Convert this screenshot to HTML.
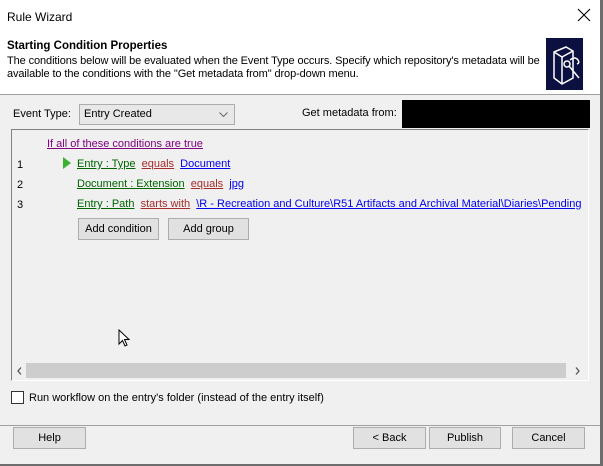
<!DOCTYPE html>
<html><head><meta charset="utf-8"><style>
*{margin:0;padding:0;box-sizing:border-box}
body{width:603px;height:466px;overflow:hidden;background:#6d6d6d;font-family:"Liberation Sans",Tahoma,sans-serif;font-size:11px;color:#000;position:relative}
.win{position:absolute;left:0;top:0;width:600px;height:464px;background:#f0f0f0}
.title{position:absolute;left:0;top:0;width:600px;height:34px;background:#fff}
.title span{position:absolute;left:7px;top:10px;font-size:12px}
.close{position:absolute;left:577px;top:8px}
.hdr{position:absolute;left:0;top:34px;width:600px;height:61px;background:#fff;border-bottom:1px solid #a0a0a0}
.hdr b{position:absolute;left:7px;top:6px;font-size:11.5px}
.hdr p{position:absolute;left:7px;top:21px;width:545px;line-height:13px;font-size:11px;letter-spacing:-0.1px}
.icon{position:absolute;left:546px;top:4px;width:37px;height:52px;background:#0c1040}
.abs{position:absolute}
.sel{left:79px;top:104px;width:156px;height:21px;border:1px solid #adadad;background:#e8e8e8;padding:3px 4px}
.blk{left:402px;top:100px;width:188px;height:28px;background:#000}
.panel{left:11px;top:129px;width:578px;height:252px;border:1px solid #828282;border-right-color:#fff;border-bottom-color:#fff;background:#f0f0f0}
a{text-decoration:underline}
.g{color:#006400}.r{color:#a52a2a}.b{color:#0000ee}.p{color:#800080}
.btn{position:absolute;height:22px;border:1px solid #adadad;background:#e1e1e1;text-align:center;line-height:20px;font-size:11px}
.sb{left:12px;top:361px;width:576px;height:18px;background:#f0f0f0}
.sbt{left:26px;top:363px;width:540px;height:15px;background:#cdcdcd}
</style></head><body>
<div class="win">
<div class="title"><span>Rule Wizard</span><svg class="close" width="14" height="14" viewBox="0 0 14 14"><path d="M1 1L13 13M13 1L1 13" stroke="#000" stroke-width="1.1"/></svg></div>
<div class="hdr"><b>Starting Condition Properties</b>
<p>The conditions below will be evaluated when the Event Type occurs. Specify which repository's metadata will be available to the conditions with the "Get metadata from" drop-down menu.</p>
<div class="icon"><svg width="37" height="52" viewBox="0 0 37 52"><g fill="none" stroke="#fff" stroke-width="1.5"><path d="M8 14 L20 9 L27 13 L27 40 L16 46 L8 40 Z M8 14 L16 19 L27 13 M16 19 L16 46"/><circle cx="21" cy="26" r="3"/><path d="M23 28 L33 40"/><path d="M24 22 q5 -4 8 0 q2 3 -1 4"/></g></svg></div>
</div>
<div class="abs" style="left:13px;top:108px">Event Type:</div>
<div class="abs sel">Entry Created<svg style="position:absolute;right:6px;top:7px" width="9" height="5" viewBox="0 0 9 5"><path d="M0.5 0.5L4.5 4.5L8.5 0.5" fill="none" stroke="#666"/></svg></div>
<div class="abs" style="left:302px;top:107px">Get metadata from:</div>
<div class="abs blk"></div>
<div class="abs panel"></div>
<div class="abs" style="left:47px;top:138px"><a class="p">If all of these conditions are true</a></div>
<div class="abs" style="left:17px;top:159px">1</div>
<div class="abs" style="left:63px;top:157px;width:0;height:0;border-left:8px solid #3cb030;border-top:6px solid transparent;border-bottom:6px solid transparent"></div>
<div class="abs" style="left:77px;top:158px"><a class="g">Entry : Type</a>&nbsp; <a class="r">equals</a>&nbsp; <a class="b">Document</a></div>
<div class="abs" style="left:17px;top:179px">2</div>
<div class="abs" style="left:77px;top:178px"><a class="g">Document : Extension</a>&nbsp; <a class="r">equals</a>&nbsp; <a class="b">jpg</a></div>
<div class="abs" style="left:17px;top:199px">3</div>
<div class="abs" style="left:77px;top:198px;white-space:nowrap"><a class="g">Entry : Path</a>&nbsp; <a class="r">starts with</a>&nbsp; <a class="b">\R - Recreation and Culture\R51 Artifacts and Archival Material\Diaries\Pending</a></div>
<div class="btn" style="left:78px;top:218px;width:81px">Add condition</div>
<div class="btn" style="left:168px;top:218px;width:81px">Add group</div>
<svg class="abs" style="left:118px;top:329px" width="12" height="18" viewBox="0 0 12 18"><path d="M1 1L1 15L4.5 11.5L7 17L9 16L6.5 10.5L11 10.5Z" fill="#fff" stroke="#000"/></svg>
<div class="abs sb"></div>
<div class="abs sbt"></div>
<svg class="abs" style="left:17px;top:367px" width="5" height="8" viewBox="0 0 5 8"><path d="M4 0.5L1 4L4 7.5" fill="none" stroke="#555" stroke-width="1.3"/></svg>
<svg class="abs" style="left:575px;top:367px" width="5" height="8" viewBox="0 0 5 8"><path d="M1 0.5L4 4L1 7.5" fill="none" stroke="#555" stroke-width="1.3"/></svg>
<div class="abs" style="left:11px;top:391px;width:13px;height:13px;border:1px solid #333;background:#fff"></div>
<div class="abs" style="left:29px;top:392px">Run workflow on the entry's folder (instead of the entry itself)</div>
<div class="abs" style="left:0;top:425px;width:600px;height:1px;background:#a0a0a0"></div>
<div class="btn" style="left:13px;top:427px;width:73px">Help</div>
<div class="btn" style="left:353px;top:427px;width:73px">&lt; Back</div>
<div class="btn" style="left:429px;top:427px;width:72px">Publish</div>
<div class="btn" style="left:512px;top:427px;width:73px">Cancel</div>
</div>
</body></html>
